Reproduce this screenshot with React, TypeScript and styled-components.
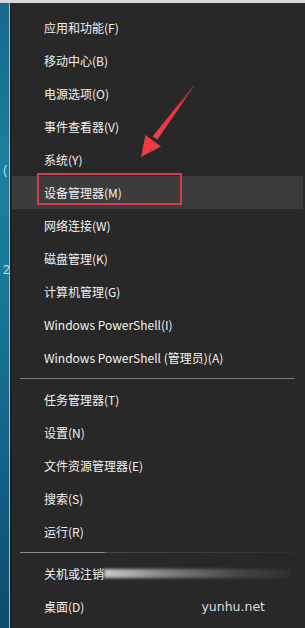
import styled, { createGlobalStyle } from 'styled-components';

const GlobalStyle = createGlobalStyle`
  html, body {
    margin: 0;
    padding: 0;
    background: #282828;
  }
  body {
    font-family: "Noto Sans CJK SC", "Noto Sans", sans-serif;
  }
`;

type Item = { label: string; marked?: boolean; smear?: boolean; mark?: string };

const groups: Item[][] = [
  [
    { label: '应用和功能(F)' },
    { label: '移动中心(B)' },
    { label: '电源选项(O)' },
    { label: '事件查看器(V)' },
    { label: '系统(Y)' },
    { label: '设备管理器(M)', marked: true },
    { label: '网络连接(W)' },
    { label: '磁盘管理(K)' },
    { label: '计算机管理(G)' },
    { label: 'Windows PowerShell(I)' },
    { label: 'Windows PowerShell (管理员)(A)' },
  ],
  [
    { label: '任务管理器(T)' },
    { label: '设置(N)' },
    { label: '文件资源管理器(E)' },
    { label: '搜索(S)' },
    { label: '运行(R)' },
  ],
  [
    { label: '关机或注销', smear: true },
    { label: '桌面(D)', mark: 'yunhu.net' },
  ],
];

function App() {
  return (
    <Screen>
      <GlobalStyle />
      <TopEdge />
      <Body>
        <Desktop>
          <DesktopGlyph style={{ top: 160 }}>(</DesktopGlyph>
          <DesktopGlyph style={{ top: 260 }}>2</DesktopGlyph>
        </Desktop>
        <Edge />
        <Menu>
          {groups.map((group, gi) => (
            <div key={gi}>
              {gi > 0 && <Separator $fade={gi === 2} />}
              {group.map((item) => (
                <Row key={item.label} $marked={item.marked}>
                  <span>{item.label}</span>
                  {item.smear && <Smear />}
                  {item.mark && <Watermark>{item.mark}</Watermark>}
                </Row>
              ))}
            </div>
          ))}
        </Menu>
      </Body>
      <Arrow viewBox="0 0 305 628" width="305" height="628">
        <defs>
          <linearGradient id="ar" x1="1" y1="0" x2="0" y2="1">
            <stop offset="0" stopColor="#b02a35" stopOpacity="0.6" />
            <stop offset="0.4" stopColor="#e3343f" />
            <stop offset="1" stopColor="#f0414a" />
          </linearGradient>
        </defs>
        <polygon
          points="194.5,86 193.5,85.4 152.6,136.4 157.4,139.6"
          fill="url(#ar)"
        />
        <polygon points="141,157 145.5,135 161,146.5" fill="#ee3a44" />
      </Arrow>
    </Screen>
  );
}

const Screen = styled.div`
  position: relative;
  width: 305px;
  height: 628px;
  overflow: hidden;
  background: #282828;
`;

const TopEdge = styled.div`
  height: 3px;
  background: #d8d8d8;
`;

const Body = styled.div`
  display: flex;
  height: 625px;
`;

const Desktop = styled.div`
  position: relative;
  width: 9px;
  overflow: hidden;
  background: linear-gradient(
    180deg,
    #16698c 0%,
    #1c7ea0 25%,
    #1a7899 45%,
    #13658a 70%,
    #0d4c6c 100%
  );
`;

const DesktopGlyph = styled.span`
  position: absolute;
  left: 3px;
  font-family: "Liberation Sans", sans-serif;
  font-size: 12px;
  color: #bfe6f2;
`;

const Edge = styled.div`
  width: 1px;
  background: #a9bcc4;
  border-right: 2px solid #1f1f1f;
`;

const Menu = styled.div`
  flex: 1;
  padding: 8px 2px 0 0;
  background: #282828;
`;

const Row = styled.div<{ $marked?: boolean }>`
  position: relative;
  display: flex;
  align-items: center;
  height: 33px;
  padding-left: 32px;
  font-size: 12px;
  color: #f2f2f2;
  white-space: nowrap;
  background: ${(p) => (p.$marked ? '#3c3c3c' : 'transparent')};

  ${(p) =>
    p.$marked &&
    `
    &::after {
      content: '';
      position: absolute;
      left: 25px;
      top: -3px;
      width: 141px;
      height: 28px;
      border: 2px solid #d43d4c;
    }
  `}
`;

const Separator = styled.div<{ $fade?: boolean }>`
  height: 9px;
  display: flex;
  align-items: center;
  padding: 0 8px 0 8px;

  &::before {
    content: '';
    flex: 1;
    height: 1px;
    background: ${(p) =>
      p.$fade
        ? 'linear-gradient(90deg, #8a8a8a 0 30%, #4a4a4a 32%, #3a3a3a 70%, #2e2e2e 100%)'
        : '#7a7a7a'};
  }
`;

const Smear = styled.span`
  flex: 1;
  height: 9px;
  margin-right: 12px;
  background: linear-gradient(
    90deg,
    rgba(255, 255, 255, 0.75) 0%,
    rgba(230, 230, 230, 0.45) 35%,
    rgba(200, 200, 200, 0.2) 70%,
    rgba(200, 200, 200, 0.04) 100%
  );
  filter: blur(1.5px);
`;

const Watermark = styled.span`
  margin-left: auto;
  margin-right: 38px;
  font-family: "DejaVu Sans", sans-serif;
  font-size: 12.5px;
  color: #dcdcdc;
`;

const Arrow = styled.svg`
  position: absolute;
  left: 0;
  top: 0;
  pointer-events: none;
`;

export default App;
